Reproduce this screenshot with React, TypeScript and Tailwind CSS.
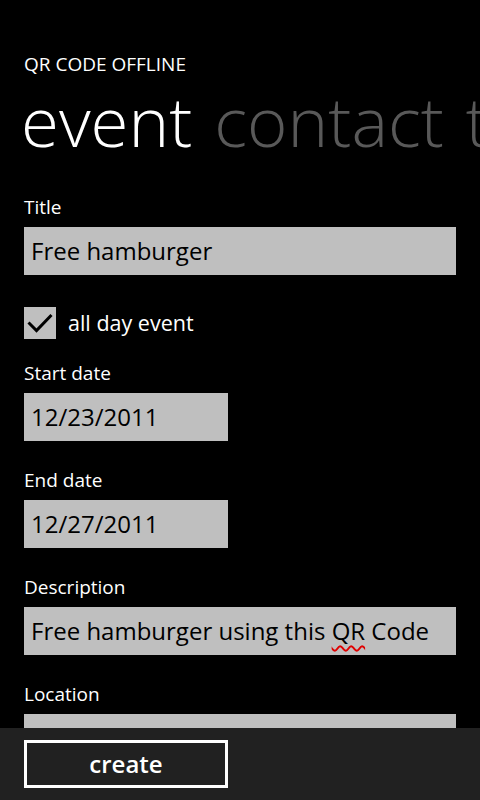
const font = { fontFamily: '"Open Sans", "Noto Sans", sans-serif' };

const Field = ({
  label,
  value,
  narrow,
  children,
}: {
  label: string;
  value?: string;
  narrow?: boolean;
  children?: React.ReactNode;
}) => {
  return (
    <div className="mb-[27px]">
      <div className="text-[19px] leading-[24px] text-white">{label}</div>
      <div
        className={`mt-[8px] h-[48px] bg-[#bfbfbf] px-[7px] text-[24px] leading-[48px] text-black whitespace-nowrap overflow-hidden ${
          narrow ? "w-[204px]" : "w-[432px]"
        }`}
      >
        {children ?? value}
      </div>
    </div>
  );
};

export default function App() {
  return (
    <div
      className="w-[480px] h-[800px] bg-black flex flex-col overflow-hidden"
      style={font}
    >
      <div className="flex-1 overflow-hidden pl-[24px]">
        {/* app title */}
        <div className="pt-[50px] text-[19px] leading-[28px] text-white">
          QR CODE OFFLINE
        </div>

        {/* pivot headers */}
        <div className="mt-[6px] whitespace-nowrap overflow-hidden text-[69px] leading-[72px] font-light -ml-[3px]">
          <span className="text-white">event</span>
          <span className="ml-[22px] text-[#595959]">contact</span>
          <span className="ml-[22px] text-[#595959]">text</span>
        </div>

        {/* form */}
        <div className="mt-[39px]">
          <Field label="Title" value="Free hamburger" />

          <div className="mt-[32px] flex items-center gap-[12px]">
            <div className="w-[32px] h-[32px] bg-[#bfbfbf] flex items-center justify-center">
              <svg width="32" height="32" viewBox="0 0 32 32">
                <path
                  d="M4.5 15.5 L12.5 23.5 L27.5 8"
                  fill="none"
                  stroke="black"
                  strokeWidth="3"
                />
              </svg>
            </div>
            <span className="text-[21.5px] leading-[32px] text-white">
              all day event
            </span>
          </div>

          <div className="mt-[22px]">
            <Field label="Start date" value="12/23/2011" narrow />
            <Field label="End date" value="12/27/2011" narrow />
            <Field label="Description">
              Free hamburger using this{" "}
              <span className="underline decoration-wavy decoration-[#e00000] decoration-[1.5px] underline-offset-[5px]">
                QR
              </span>{" "}
              Code
            </Field>
            <Field label="Location" value="" />
          </div>
        </div>
      </div>

      {/* application bar */}
      <div className="h-[72px] bg-[#212121] pl-[24px] pt-[12px]">
        <button className="w-[204px] h-[48px] border-[3px] border-white text-white text-[24px] font-semibold leading-none">
          create
        </button>
      </div>
    </div>
  );
}
